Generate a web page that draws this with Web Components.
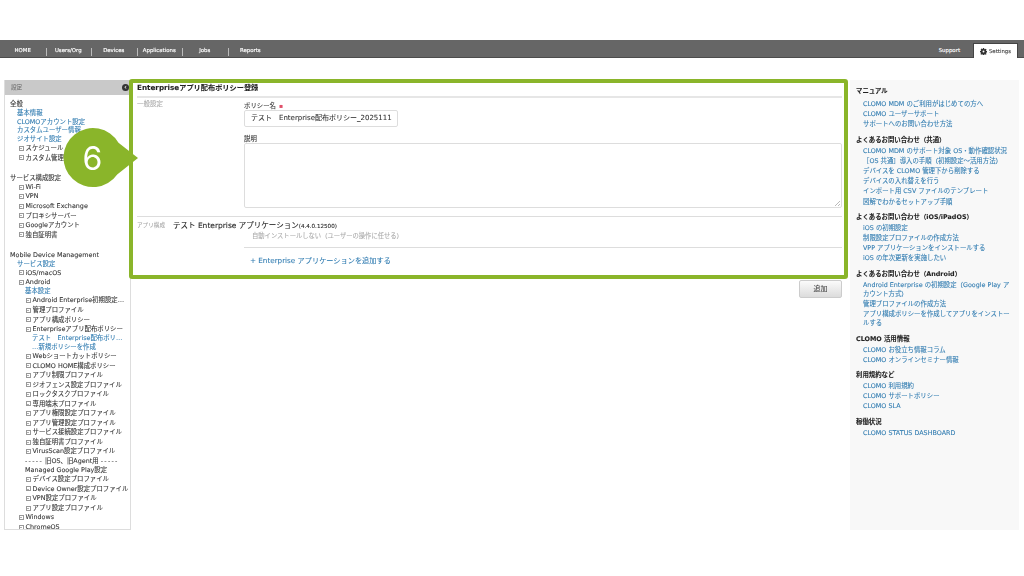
<!DOCTYPE html>
<html lang="ja">
<head>
<meta charset="utf-8">
<title>CLOMO Settings</title>
<style>
  html, body { margin: 0; background: #fff; }
  body {
    width: 1024px;
    height: 576px;
    overflow: hidden;
    position: relative;
    font: 6.4px/1 "DejaVu Sans", "Noto Sans CJK JP", sans-serif;
    color: #333;
    -webkit-text-stroke: 0.08px currentColor;
  }
  .dash { letter-spacing: 1.3px; }
</style>
</head>
<body>
<app-shell>
  <top-nav slot="nav"></top-nav>

  <side-tree slot="side">
    <tree-head>全般</tree-head>
    <tree-row depth="1" link>基本情報</tree-row>
    <tree-row depth="1" link>CLOMOアカウント設定</tree-row>
    <tree-row depth="1" link>カスタムユーザー情報</tree-row>
    <tree-row depth="1" link>ジオサイト設定</tree-row>
    <tree-row depth="2" icon>スケジュール</tree-row>
    <tree-row depth="2" icon>カスタム管理</tree-row>
    <tree-head gap>サービス構成設定</tree-head>
    <tree-row depth="2" icon>Wi-Fi</tree-row>
    <tree-row depth="2" icon>VPN</tree-row>
    <tree-row depth="2" icon>Microsoft Exchange</tree-row>
    <tree-row depth="2" icon>プロキシサーバー</tree-row>
    <tree-row depth="2" icon>Googleアカウント</tree-row>
    <tree-row depth="2" icon>独自証明書</tree-row>
    <tree-head gap>Mobile Device Management</tree-head>
    <tree-row depth="1" link>サービス設定</tree-row>
    <tree-row depth="2" icon>iOS/macOS</tree-row>
    <tree-row depth="2" icon>Android</tree-row>
    <tree-row depth="3" link>基本設定</tree-row>
    <tree-row depth="4" icon>Android Enterprise初期設定…</tree-row>
    <tree-row depth="4" icon>管理プロファイル</tree-row>
    <tree-row depth="4" icon>アプリ構成ポリシー</tree-row>
    <tree-row depth="4" icon>Enterpriseアプリ配布ポリシー</tree-row>
    <tree-row depth="5" link>テスト　Enterprise配布ポリ…</tree-row>
    <tree-row depth="5" link>…新規ポリシーを作成</tree-row>
    <tree-row depth="4" icon>Webショートカットポリシー</tree-row>
    <tree-row depth="4" icon>CLOMO HOME構成ポリシー</tree-row>
    <tree-row depth="4" icon>アプリ制限プロファイル</tree-row>
    <tree-row depth="4" icon>ジオフェンス設定プロファイル</tree-row>
    <tree-row depth="4" icon>ロックタスクプロファイル</tree-row>
    <tree-row depth="4" icon>専用端末プロファイル</tree-row>
    <tree-row depth="4" icon>アプリ権限設定プロファイル</tree-row>
    <tree-row depth="4" icon>アプリ管理設定プロファイル</tree-row>
    <tree-row depth="4" icon>サービス接続設定プロファイル</tree-row>
    <tree-row depth="4" icon>独自証明書プロファイル</tree-row>
    <tree-row depth="4" icon>VirusScan設定プロファイル</tree-row>
    <tree-row depth="3"><span class="dash">-----</span> 旧OS、旧Agent用 <span class="dash">-----</span></tree-row>
    <tree-row depth="3" compact>Managed Google Play設定</tree-row>
    <tree-row depth="4" icon>デバイス設定プロファイル</tree-row>
    <tree-row depth="4" icon>Device Owner設定プロファイル</tree-row>
    <tree-row depth="4" icon>VPN設定プロファイル</tree-row>
    <tree-row depth="4" icon>アプリ設定プロファイル</tree-row>
    <tree-row depth="2" icon>Windows</tree-row>
    <tree-row depth="2" icon>ChromeOS</tree-row>
  </side-tree>

  <policy-form slot="main"></policy-form>

  <help-panel slot="help">
    <help-group title="マニュアル">
      <a>CLOMO MDM のご利用がはじめての方へ</a>
      <a>CLOMO ユーザーサポート</a>
      <a>サポートへのお問い合わせ方法</a>
    </help-group>
    <help-group title="よくあるお問い合わせ（共通）">
      <a>CLOMO MDM のサポート対象 OS・動作確認状況</a>
      <a>［OS 共通］導入の手順（初期設定〜活用方法）</a>
      <a>デバイスを CLOMO 管理下から削除する</a>
      <a>デバイスの入れ替えを行う</a>
      <a>インポート用 CSV ファイルのテンプレート</a>
      <a>図解でわかるセットアップ手順</a>
    </help-group>
    <help-group title="よくあるお問い合わせ（iOS/iPadOS）">
      <a>iOS の初期設定</a>
      <a>制限設定プロファイルの作成方法</a>
      <a>VPP アプリケーションをインストールする</a>
      <a>iOS の年次更新を実施したい</a>
    </help-group>
    <help-group title="よくあるお問い合わせ（Android）">
      <a>Android Enterprise の初期設定（Google Play アカウント方式）</a>
      <a>管理プロファイルの作成方法</a>
      <a>アプリ構成ポリシーを作成してアプリをインストールする</a>
    </help-group>
    <help-group title="CLOMO 活用情報">
      <a>CLOMO お役立ち情報コラム</a>
      <a>CLOMO オンラインセミナー情報</a>
    </help-group>
    <help-group title="利用規約など">
      <a>CLOMO 利用規約</a>
      <a>CLOMO サポートポリシー</a>
      <a>CLOMO SLA</a>
    </help-group>
    <help-group title="稼働状況">
      <a>CLOMO STATUS DASHBOARD</a>
    </help-group>
  </help-panel>
</app-shell>
<step-callout number="6"></step-callout>

<script>
  const LINK = "#2f7bb0";

  class AppShell extends HTMLElement {
    constructor() {
      super();
      this.attachShadow({ mode: "open" });
      this.shadowRoot.innerHTML = `
        <style>
          :host { display: block; padding-top: 40px; filter: blur(0.35px); }
          .body {
            display: grid;
            grid-template-columns: 127px 717px 171px;
            padding: 22px 0 0 4px;
            height: 450px;
          }
        </style>
        <slot name="nav"></slot>
        <div class="body">
          <slot name="side"></slot>
          <slot name="main"></slot>
          <slot name="help"></slot>
        </div>`;
    }
  }

  class TopNav extends HTMLElement {
    constructor() {
      super();
      this.attachShadow({ mode: "open" });
      const items = ["HOME", "Users/Org", "Devices", "Applications", "Jobs", "Reports"];
      this.shadowRoot.innerHTML = `
        <style>
          :host {
            display: flex;
            height: 18px;
            background: #666;
            border-bottom: 1px solid #4c4c4c;
            box-sizing: border-box;
            color: #fff;
            font-size: 5.4px;
            -webkit-text-stroke: 0.15px #fff;
          }
          .item {
            width: 45.5px;
            box-sizing: border-box;
            padding-top: 5px;
            display: flex;
            align-items: center;
            justify-content: center;
            position: relative;
          }
          .item + .item::before {
            content: "";
            position: absolute;
            left: 0;
            top: 7.5px;
            height: 8px;
            width: 1px;
            background: #bbb;
          }
          .spacer { flex: 1; }
          .support { display: flex; align-items: center; padding-top: 5px; margin-right: 13px; }
          .tab {
            width: 45px;
            margin: 3px 6px -1px 0;
            background: #fff;
            border: 1px solid #444;
            border-bottom: none;
            box-sizing: border-box;
            padding-top: 1px;
            color: #444;
            -webkit-text-stroke: 0.1px #444;
            display: flex;
            align-items: center;
            justify-content: center;
            gap: 2px;
          }
          svg { width: 7px; height: 7px; display: block; }
        </style>
        ${items.map((t) => `<div class="item">${t}</div>`).join("")}
        <div class="spacer"></div>
        <div class="support">Support</div>
        <div class="tab">
          <svg viewBox="0 0 16 16"><path fill="#333" d="M6.6 0h2.8l.4 2.2 1.4.6 1.9-1.3 2 2-1.3 1.9.6 1.4 2.1.4v2.8l-2.1.4-.6 1.4 1.3 1.9-2 2-1.9-1.3-1.4.6-.4 2.1H6.6l-.4-2.1-1.4-.6-1.9 1.3-2-2 1.3-1.9-.6-1.4L0 9.4V6.6l2.1-.4.6-1.4L1.4 2.9l2-2 1.9 1.3 1.4-.6z"/><circle cx="8" cy="8" r="2.2" fill="#fff"/></svg>
          Settings
        </div>`;
    }
  }

  class SideTree extends HTMLElement {
    constructor() {
      super();
      this.attachShadow({ mode: "open" });
      this.shadowRoot.innerHTML = `
        <style>
          :host {
            display: block;
            background: #fff;
            border: 1px solid #ddd;
            border-top: none;
            box-sizing: border-box;
            height: 450px;
            overflow: hidden;
          }
          .head {
            height: 15px;
            background: #c9c9c9;
            color: #777;
            font-size: 5.6px;
            display: flex;
            align-items: center;
            justify-content: space-between;
            padding: 0 1px 0 6px;
          }
          .toggle {
            width: 7px; height: 7px;
            border-radius: 50%;
            background: #333;
            color: #fff;
            font-size: 6px;
            line-height: 6px;
            text-align: center;
          }
          .list { padding: 4.3px 0 0 5px; }
        </style>
        <div class="head"><span>設定</span><span class="toggle">‹</span></div>
        <div class="list"><slot></slot></div>`;
    }
  }

  class TreeHead extends HTMLElement {
    constructor() {
      super();
      this.attachShadow({ mode: "open" });
      this.shadowRoot.innerHTML = `
        <style>
          :host { display: block; height: 9.4px; line-height: 10.6px; white-space: nowrap; color: #333; }
          :host([gap]) { margin-top: 10.4px; }
        </style>
        <slot></slot>`;
    }
  }

  class TreeRow extends HTMLElement {
    constructor() {
      super();
      this.attachShadow({ mode: "open" });
      this.shadowRoot.innerHTML = `
        <style>
          :host {
            display: flex;
            align-items: center;
            height: 9.55px;
            white-space: pre;
            color: #333;
            padding-left: var(--indent, 0);
          }
          :host([link]) { color: ${LINK}; height: 8.7px; }
          :host([compact]) { height: 8.7px; }
          .box {
            width: 3px; height: 3px;
            border: 0.5px solid #999;
            background: linear-gradient(#888, #888) center / 2.4px 0.7px no-repeat;
            margin-right: 1.5px;
            flex: none;
            display: none;
          }
          :host([icon]) .box { display: block; }
        </style>
        <span class="box"></span><slot></slot>`;
    }
    connectedCallback() {
      const indents = { 1: 7, 2: 9, 3: 15, 4: 16, 5: 22 };
      this.style.setProperty("--indent", indents[this.getAttribute("depth")] + "px");
    }
  }

  class PolicyForm extends HTMLElement {
    constructor() {
      super();
      this.attachShadow({ mode: "open" });
      this.shadowRoot.innerHTML = `
        <style>
          :host { display: block; padding: 0 6px; color: #333; }
          h1 { margin: 0; font-size: 7.2px; line-height: 15px; height: 15.5px; color: #222; }
          hr { border: none; height: 2px; background: #e6e6e6; margin: 0; }
          .row { display: grid; grid-template-columns: 107px 1fr; }
          .label { color: #aaa; font-size: 6.5px; padding-top: 3.5px; }
          .field-label { margin-top: 4px; line-height: 8px; }
          .req { color: #e0506a; font-size: 6px; margin-left: 1px; }
          .input {
            width: 154px;
            height: 17px;
            box-sizing: border-box;
            border: 1px solid #ddd;
            border-radius: 2px;
            padding-left: 6px;
            margin-top: 0.5px;
            display: flex;
            align-items: center;
            white-space: nowrap;
            overflow: hidden;
            font-size: 7px;
          }
          .area {
            height: 64.9px;
            box-sizing: border-box;
            border: 1px solid #ddd;
            border-radius: 2px;
            position: relative;
          }
          .grip {
            position: absolute; right: 1px; bottom: 1px;
            width: 5px; height: 5px;
            background: linear-gradient(135deg, transparent 50%, #bbb 50%, #bbb 60%, transparent 60%, transparent 75%, #bbb 75%, #bbb 85%, transparent 85%);
          }
          .sep { margin-top: 8px; height: 1px; background: #ddd; }
          .app { padding-top: 4px; height: 30px; display: flex; align-items: flex-start; white-space: nowrap; box-sizing: border-box; }
          .app .label { padding-top: 0.5px; width: 36px; font-size: 5.6px; line-height: 8px; flex: none; }
          .app .name { font-size: 7.5px; line-height: 9px; color: #222; }
          .app .ver { font-size: 5.6px; }
          .auto { color: #aaa; font-size: 6.3px; margin: 1.5px 0 0 79px; line-height: 7px; }
          .line { height: 1px; background: #ddd; margin-left: 107px; }
          .add { margin: 8px 0 0 113px; color: ${LINK}; font-size: 7.2px; line-height: 9px; }
          .actions { display: flex; justify-content: flex-end; margin-top: 15.5px; }
          button {
            width: 43px; height: 17.5px;
            font: inherit;
            font-size: 7px;
            color: #444;
            border: 1px solid #ccc;
            border-radius: 2px;
            background: linear-gradient(#fbfbfb, #dcdcdc);
            padding: 0;
          }
        </style>
        <h1>Enterpriseアプリ配布ポリシー登録</h1>
        <hr>
        <div class="row">
          <div class="label">一般設定</div>
          <div>
            <div class="field-label">ポリシー名 <span class="req">▪</span></div>
            <div class="input">テスト　Enterprise配布ポリシー_2025111</div>
            <div class="field-label" style="margin-top:8px">説明</div>
            <div class="area"><span class="grip"></span></div>
          </div>
        </div>
        <div class="sep"></div>
        <div class="app">
          <div class="label">アプリ構成</div>
          <div>
            <div class="name">テスト Enterprise アプリケーション<span class="ver">(4.4.0.12500)</span></div>
            <div class="auto">自動インストールしない（ユーザーの操作に任せる）</div>
          </div>
        </div>
        <div class="line"></div>
        <div class="add">+ Enterprise アプリケーションを追加する</div>
        <div class="actions"><button>追加</button></div>`;
    }
  }

  class HelpPanel extends HTMLElement {
    constructor() {
      super();
      this.attachShadow({ mode: "open" });
      this.shadowRoot.innerHTML = `
        <style>
          :host {
            display: block;
            background: #f8f8f8;
            height: 450px;
            box-sizing: border-box;
            padding: 7px 7px 0 6px;
            margin-left: 2px;
          }
        </style>
        <slot></slot>`;
    }
  }

  class HelpGroup extends HTMLElement {
    constructor() {
      super();
      this.attachShadow({ mode: "open" });
      this.shadowRoot.innerHTML = `
        <style>
          :host { display: block; margin-bottom: 6px; }
          :host(:first-child) h3 { margin-bottom: 4px; }
          h3 { margin: 0 0 2px; font-size: 6.4px; line-height: 9px; color: #222; font-weight: bold; }
          .links { padding-left: 7px; color: ${LINK}; }
          ::slotted(a) { display: block; line-height: 9.2px; margin-bottom: 1px; }
        </style>
        <h3></h3>
        <div class="links"><slot></slot></div>`;
    }
    connectedCallback() {
      this.shadowRoot.querySelector("h3").textContent = this.getAttribute("title");
    }
  }

  // the tutorial overlay: green frame round the form plus the numbered bubble
  class StepCallout extends HTMLElement {
    constructor() {
      super();
      this.attachShadow({ mode: "open" });
      this.shadowRoot.innerHTML = `
        <style>
          :host { display: block; position: absolute; left: 0; top: 0; width: 1024px; height: 576px; pointer-events: none; filter: blur(0.35px); }
          .frame {
            position: absolute;
            left: 129px; top: 79px;
            width: 719px; height: 200px;
            box-sizing: border-box;
            border: 4px solid #8ab52a;
            border-radius: 3px;
          }
          svg { position: absolute; left: 60px; top: 125px; }
          .num {
            position: absolute;
            left: 63px; top: 129px;
            width: 59px; height: 59px;
            display: flex; align-items: center; justify-content: center;
            color: #fff;
            -webkit-text-stroke: 0;
            font: 400 32px/1 Inter, sans-serif;
          }
        </style>
        <div class="frame"></div>
        <svg width="82" height="66" viewBox="0 0 82 66">
          <path fill="#8ab52a" d="M58.5 17.75L78 33 57.2 49.4A29.5 29.5 0 1 1 58.5 17.75z"/>
        </svg>
        <div class="num"></div>`;
    }
    connectedCallback() {
      this.shadowRoot.querySelector(".num").textContent = this.getAttribute("number");
    }
  }

  customElements.define("app-shell", AppShell);
  customElements.define("top-nav", TopNav);
  customElements.define("side-tree", SideTree);
  customElements.define("tree-head", TreeHead);
  customElements.define("tree-row", TreeRow);
  customElements.define("policy-form", PolicyForm);
  customElements.define("help-panel", HelpPanel);
  customElements.define("help-group", HelpGroup);
  customElements.define("step-callout", StepCallout);
</script>
</body>
</html>
